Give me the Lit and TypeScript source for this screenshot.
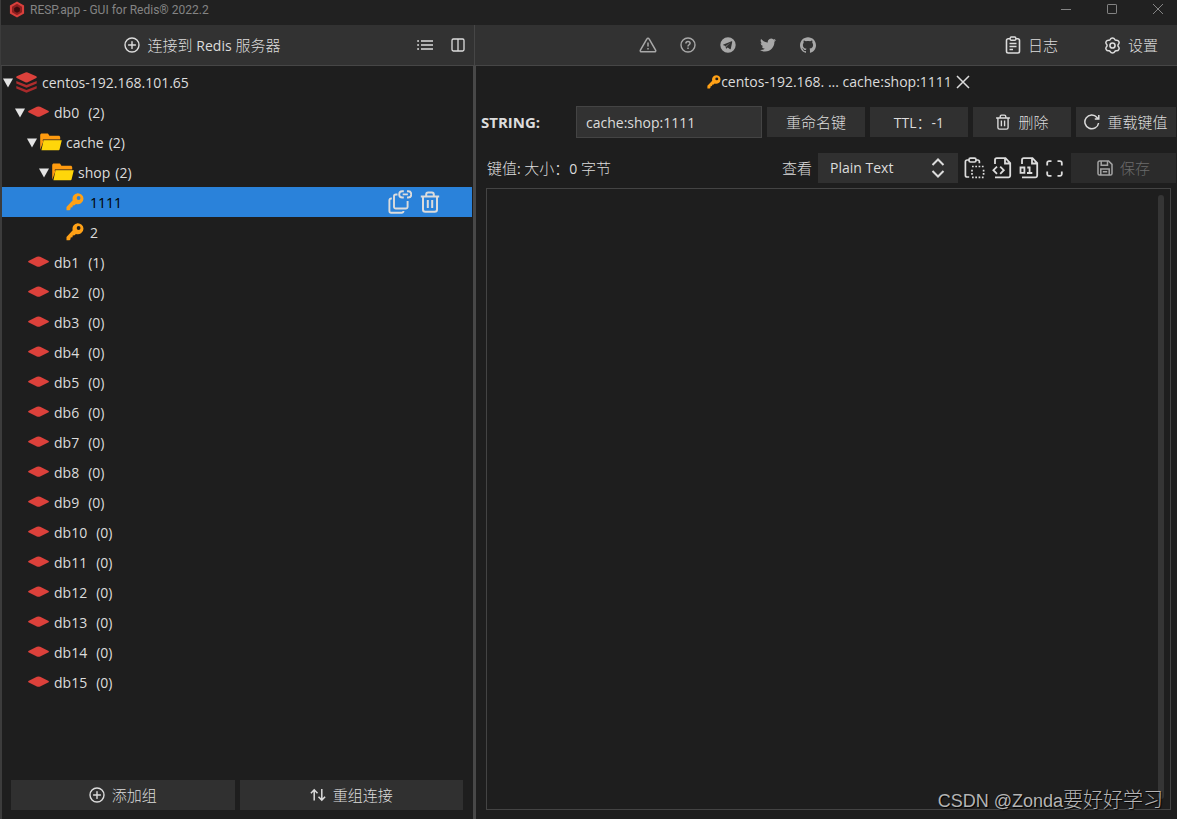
import { LitElement, html, css, svg, nothing, TemplateResult } from "lit";
import { customElement, property, state } from "lit/decorators.js";
import { classMap } from "lit/directives/class-map.js";
import { styleMap } from "lit/directives/style-map.js";

interface Glyph {
  box: string;
  w: number;
  h: number;
  body: TemplateResult;
}

const keyBody = svg`<path fill="#ffa116" fill-rule="evenodd" d="M11.6 0.2a5.700 5.700 0 0 1 5.900 5.600 5.600 5.600 0 0 1-7.600 5.100l-1.300 1.300-1.900.2-.2 1.900-1.800.3-.3 1.800-.9.8H.5v-3.300l6.200-6.600A5.600 5.600 0 0 1 11.600.2zM12.600 3.100a1.900 1.900 0 1 0 0 3.800 1.900 1.900 0 0 0 0-3.800z"/>`;

const glyphs: Record<string, Glyph> = {
  logo: {
    box: "0 0 16 18", w: 16, h: 17,
    body: svg`<path fill="#d9403c" d="M8 .5 15.5 4.7v8.6L8 17.5.5 13.3V4.7z"/><path fill="#8c1f20" d="M8 3 13.3 6v6L8 15 2.7 12V6z"/><path fill="#3a0c0d" d="M8 5.7 11 7.4v3.4L8 12.4 5 10.8V7.4z"/>`,
  },
  minimize: { box: "0 0 12 12", w: 12, h: 12, body: svg`<path d="M1 6.5h10" stroke="currentColor" stroke-width="1"/>` },
  maximize: { box: "0 0 12 12", w: 12, h: 12, body: svg`<rect x="1.5" y="1.5" width="9" height="9" rx=".6" fill="none" stroke="currentColor"/>` },
  quit: { box: "0 0 12 12", w: 12, h: 12, body: svg`<path d="M1 1l10 10M11 1 1 11" stroke="currentColor"/>` },
  plus: {
    box: "0 0 16 16", w: 16, h: 16,
    body: svg`<circle cx="8" cy="8" r="7" fill="none" stroke="currentColor" stroke-width="1.4"/><path d="M8 4.6v6.8M4.6 8h6.8" stroke="currentColor" stroke-width="1.4" stroke-linecap="round"/>`,
  },
  list: {
    box: "0 0 16 12", w: 16, h: 12,
    body: svg`<path d="M4 2h12M4 6h12M4 10h12M.2 2h1.8M.2 6h1.8M.2 10h1.8" stroke="currentColor" stroke-width="1.4"/>`,
  },
  columns: {
    box: "0 0 14 14", w: 14, h: 14,
    body: svg`<rect x="1" y="1" width="12" height="12" rx="1.4" fill="none" stroke="currentColor" stroke-width="1.3"/><path d="M7 1v12" stroke="currentColor" stroke-width="1.3"/>`,
  },
  warning: {
    box: "0 0 18 16", w: 18, h: 16,
    body: svg`<path d="M9 1.2c.5 0 .9.2 1.1.6l6.5 11.3c.5.9-.1 1.7-1.1 1.7h-13c-1 0-1.600-.8-1.100-1.700L7.900 1.800c.2-.4.6-.6 1.100-.6z" fill="none" stroke="currentColor" stroke-width="1.500"/><path d="M9 5.400v4.200M9 11v1.600" stroke="currentColor" stroke-width="1.500"/>`,
  },
  help: {
    box: "0 0 16 16", w: 16, h: 16,
    body: svg`<circle cx="8" cy="8" r="7" fill="none" stroke="currentColor" stroke-width="1.400"/><path d="M5.900 6.500c0-1.300.9-2.100 2.100-2.100s2.100.8 2.100 1.900c0 1.400-2.100 1.500-2.100 3.100M8 10.500V12" fill="none" stroke="currentColor" stroke-width="1.500"/>`,
  },
  telegram: {
    box: "0 0 16 16", w: 16, h: 16,
    body: svg`<path fill="currentColor" fill-rule="evenodd" d="M8 .3a7.7 7.7 0 1 0 0 15.4A7.7 7.7 0 0 0 8 .3zM12.3 4.6l-1.5 7.2c-.1.5-.4.6-.8.4L7.700 10.5l-1.2 1.1c-.2.2-.4.2-.5-.2l-.5-2.5-2.100-.7c-.5-.2-.5-.5.1-.7l8.100-3.300c.4-.2.8.1.700.400zM6.200 8.800l.4 1.600.2-1.400 4-3.800z"/>`,
  },
  twitter: {
    box: "0 0 24 24", w: 16, h: 16,
    body: svg`<path fill="currentColor" d="M23.950 4.570a10 10 0 0 1-2.825.775 4.958 4.958 0 0 0 2.163-2.723c-.951.555-2.005.959-3.127 1.184a4.920 4.920 0 0 0-8.384 4.482C7.690 8.095 4.067 6.130 1.640 3.162a4.822 4.822 0 0 0-.666 2.475c0 1.710.870 3.213 2.188 4.096a4.904 4.904 0 0 1-2.228-.616v.060a4.923 4.923 0 0 0 3.946 4.827 4.996 4.996 0 0 1-2.212.085 4.936 4.936 0 0 0 4.604 3.417 9.867 9.867 0 0 1-6.102 2.105c-.390 0-.779-.023-1.170-.067a13.995 13.995 0 0 0 7.557 2.209c9.053 0 13.998-7.496 13.998-13.985 0-.210 0-.420-.015-.630A9.935 9.935 0 0 0 24 4.590z"/>`,
  },
  github: {
    box: "0 0 24 24", w: 16, h: 16,
    body: svg`<path fill="currentColor" d="M12 .297c-6.630 0-12 5.373-12 12 0 5.303 3.438 9.800 8.205 11.385.6.113.82-.258.82-.577 0-.285-.010-1.040-.015-2.040-3.338.724-4.042-1.610-4.042-1.610C4.422 18.070 3.633 17.700 3.633 17.700c-1.087-.744.084-.729.084-.729 1.205.084 1.838 1.236 1.838 1.236 1.070 1.835 2.809 1.305 3.495.998.108-.776.417-1.305.760-1.605-2.665-.3-5.466-1.332-5.466-5.930 0-1.310.465-2.380 1.235-3.220-.135-.303-.540-1.523.105-3.176 0 0 1.005-.322 3.300 1.230.960-.267 1.980-.399 3-.405 1.020.006 2.040.138 3 .405 2.280-1.552 3.285-1.230 3.285-1.230.645 1.653.240 2.873.120 3.176.765.840 1.230 1.910 1.230 3.220 0 4.610-2.805 5.625-5.475 5.920.420.360.810 1.096.810 2.220 0 1.606-.015 2.896-.015 3.286 0 .315.210.690.825.570C20.565 22.092 24 17.592 24 12.297c0-6.627-5.373-12-12-12"/>`,
  },
  log: {
    box: "0 0 16 18", w: 16, h: 18,
    body: svg`<path d="M5 2.700H3.200A1.700 1.700 0 0 0 1.500 4.400v10.900A1.700 1.700 0 0 0 3.200 17h9.600a1.700 1.700 0 0 0 1.700-1.700V4.400a1.700 1.700 0 0 0-1.700-1.700H11" fill="none" stroke="currentColor" stroke-width="1.600"/><rect x="5.200" y="1" width="5.600" height="3.200" rx="1" fill="none" stroke="currentColor" stroke-width="1.400"/><path d="M4.500 7.500h7M4.500 10.500h7M4.500 13.500H8" stroke="currentColor" stroke-width="1.300"/>`,
  },
  gear: {
    box: "0 0 16 16", w: 17, h: 17,
    body: svg`<path d="M8 .9c1.300 0 1.700.4 2.100 1.300.3.600.9.900 1.600.800 1-.1 1.600.1 2.200 1.100s.6 1.600 0 2.400a1.800 1.800 0 0 0 0 3c.6.800.6 1.400 0 2.400s-1.200 1.200-2.200 1.100c-.7-.1-1.300.2-1.600.8-.4.900-.8 1.300-2.100 1.300s-1.700-.4-2.100-1.300c-.3-.6-.9-.9-1.600-.8-1 .1-1.600-.1-2.200-1.100s-.6-1.600 0-2.400a1.800 1.800 0 0 0 0-3c-.6-.8-.6-1.400 0-2.400s1.200-1.200 2.200-1.100c.7.100 1.300-.2 1.600-.8C6.300 1.300 6.700.9 8 .9z" fill="none" stroke="currentColor" stroke-width="1.400"/><circle cx="8" cy="8" r="2.400" fill="none" stroke="currentColor" stroke-width="1.500"/>`,
  },
  caret: { box: "0 0 10 10", w: 10, h: 10, body: svg`<path fill="#e4e4e4" d="M0 .5h10L5 9.500z"/>` },
  server: {
    box: "0 0 21 21", w: 21, h: 21,
    body: svg`<path fill="#a82a2b" d="M.3 13.900 10.500 18l10.200-4.100v2.500L10.500 20.800.3 16.400z"/><path fill="#b02d2d" d="M.3 8.900 10.500 13.100l10.200-4.200v2.600L10.500 15.800.3 11.500z"/><path fill="#dc413b" d="M9.400.5Q10.500.1 11.600.5L20.300 4.300Q21.200 5.200 20.300 6.100L11.700 10.200Q10.500 10.800 9.300 10.200L.7 6.100Q-.2 5.200.7 4.300z"/>`,
  },
  db: {
    box: "0 0 21 12", w: 21, h: 12,
    body: svg`<path fill="#dc413b" d="M8.900.7Q10.500.2 12.100.7L20.600 5Q21.100 5.600 20.600 6.200L12.100 10.500Q10.500 11 8.900 10.500L.4 6.200Q-.1 5.600.4 5z"/>`,
  },
  folder: {
    box: "0 0 22 18", w: 22, h: 18,
    body: svg`<path fill="#ff9b0f" d="M.2 16.800V2.200C.2 1.200 1 .6 1.800.6h5.400c.8 0 1.200.4 1.600 1.100l.6 1h9.100c1 0 1.700.6 1.700 1.600v3.500H3.600z"/><path fill="#1e1e1e" d="M3 6h18.500v2H2.500z" opacity=".55"/><path fill="#ffd60a" d="M3.600 7.300h18.200l-2.200 8.900c-.1.700-.6 1.100-1.300 1.100H1.400z"/>`,
  },
  key: { box: "0 0 18 18", w: 18, h: 18, body: keyBody },
  keySmall: { box: "0 0 18 18", w: 14, h: 14, body: keyBody },
  copyLink: {
    box: "0 0 24 24", w: 24, h: 24,
    body: svg`<g fill="none" stroke="currentColor" stroke-width="1.900"><path d="M9.500 4.500H7.800A1.800 1.800 0 0 0 6 6.300v10.400a1.800 1.800 0 0 0 1.800 1.800h10a1.800 1.800 0 0 0 1.800-1.800V11"/><path d="M3.800 8.500H3.200A1.800 1.800 0 0 0 1.400 10.300V21A1.800 1.800 0 0 0 3.200 22.800h10.500a1.800 1.800 0 0 0 1.800-1.800"/><path d="M15.800 1.300h-1.500a3 3 0 0 0 0 6.200h1.500M19 1.300h1.200a3 3 0 0 1 0 6.200H19M14.700 4.400h5.200"/></g>`,
  },
  trash: {
    box: "0 0 20 22", w: 20, h: 22,
    body: svg`<g fill="none" stroke="currentColor" stroke-width="2"><path d="M.8 5.500h18.400M6.200 5.200V3.400c0-1.200.7-1.900 1.900-1.900h3.800c1.200 0 1.900.7 1.900 1.900v1.800M3 5.500v13c0 1.500.8 2.300 2.300 2.300h9.400c1.500 0 2.300-.8 2.300-2.300v-13M7.800 9v8M12.200 9v8"/></g>`,
  },
  trashSmall: {
    box: "0 0 20 22", w: 16, h: 16,
    body: svg`<g fill="none" stroke="currentColor" stroke-width="1.900"><path d="M.5 5.500h19M6.200 5.200V3.400c0-1.200.7-1.900 1.900-1.900h3.800c1.200 0 1.900.7 1.900 1.900v1.800M3 5.500v13c0 1.500.8 2.300 2.300 2.300h9.400c1.500 0 2.300-.8 2.300-2.300v-13M7.800 9v8M12.200 9v8"/></g>`,
  },
  reload: {
    box: "0 0 16 16", w: 16, h: 16,
    body: svg`<path d="M14.600 9A6.900 6.900 0 1 1 13 3.400l1 1.100M14.800 1v4h-4" fill="none" stroke="currentColor" stroke-width="1.500"/>`,
  },
  close: { box: "0 0 14 14", w: 14, h: 14, body: svg`<path d="M1 1l12 12M13 1 1 13" stroke="currentColor" stroke-width="1.500"/>` },
  updown: {
    box: "0 0 14 20", w: 14, h: 20,
    body: svg`<path d="M1.500 7 7 1.500 12.500 7M1.500 13 7 18.500l5.500-5.500" fill="none" stroke="currentColor" stroke-width="2"/>`,
  },
  paste: {
    box: "0 0 21 22", w: 21, h: 22,
    body: svg`<g fill="none" stroke="currentColor" stroke-width="1.700"><path d="M5 3H3.200A1.800 1.800 0 0 0 1.400 4.800v13.400A1.800 1.800 0 0 0 3.200 20h2M12 3h1.600a1.800 1.800 0 0 1 1.800 1.800v1.500"/><rect x="5" y="1.200" width="7" height="3.800" rx="1.500"/><path stroke-dasharray="1.700 1.600" d="M8 9.500h12.500M8 20.400h12.500M8 12.700v6M19.600 12.700v6"/></g>`,
  },
  fileCode: {
    box: "0 0 20 22", w: 20, h: 22,
    body: svg`<g fill="none" stroke="currentColor" stroke-width="1.800"><path d="M3 7V3a1.800 1.800 0 0 1 1.800-1.800h8.700l4.700 4.900v12.400a1.800 1.800 0 0 1-1.800 1.800H3M13 1.500v5h5"/><path d="M5 9.600 1.400 13.200 5 16.800M8.200 9.600l3.600 3.600-3.600 3.600"/></g>`,
  },
  fileBinary: {
    box: "0 0 20 22", w: 20, h: 22,
    body: svg`<g fill="none" stroke="currentColor" stroke-width="1.800"><path d="M3 7V3a1.800 1.800 0 0 1 1.800-1.800h8.700l4.700 4.900v12.400a1.800 1.800 0 0 1-1.800 1.800H3M13 1.500v5h5"/><path d="M1.500 10.500h3.900v5.400H1.500zM8.300 10.500h2.300v5.400M8 16h5.300"/></g>`,
  },
  expand: {
    box: "0 0 17 17", w: 17, h: 17,
    body: svg`<path d="M1.200 5.500V3a1.800 1.800 0 0 1 1.800-1.800h2.500M11.500 1.200H14A1.800 1.800 0 0 1 15.800 3v2.500M15.800 11.500V14a1.800 1.800 0 0 1-1.800 1.800h-2.500M5.500 15.800H3A1.800 1.800 0 0 1 1.200 14v-2.500" fill="none" stroke="currentColor" stroke-width="1.800"/>`,
  },
  save: {
    box: "0 0 16 16", w: 16, h: 16,
    body: svg`<g fill="none" stroke="currentColor" stroke-width="1.500"><path d="M1 2.600A1.600 1.600 0 0 1 2.600 1h9L15 4.400v9a1.600 1.600 0 0 1-1.600 1.600H2.600A1.600 1.600 0 0 1 1 13.400z"/><path d="M4.200 1v4.200h6.300V1M3.800 15V9h8.400v6M5.800 11.700h4.400"/></g>`,
  },
  swap: {
    box: "0 0 16 14", w: 16, h: 14,
    body: svg`<path d="M4.200 12.500V2M.9 5.200l3.300-3.400 3.300 3.400M11.800 1v10.800M8.500 8.700l3.300 3.400 3.300-3.400" fill="none" stroke="currentColor" stroke-width="1.500"/>`,
  },
};

const icon = (name: string) => {
  const g = glyphs[name];
  return html`<svg width=${g.w} height=${g.h} viewBox=${g.box} aria-hidden="true">${g.body}</svg>`;
};

const shared = css`
  * { box-sizing: border-box; }
  svg { display: block; flex: none; }
  button, input, select, textarea { font: inherit; color: inherit; margin: 0; border: 0; border-radius: 0; outline: 0; }
  button {
    display: flex; align-items: center; justify-content: center; gap: 7px;
    padding: 0; background: none; white-space: nowrap;
  }
  .cjk { font-size: 15px; font-weight: 300; }
  .latin { font-size: 14px; font-weight: 400; }
`;

interface TreeNode {
  label: string;
  count?: number;
  level: number;
  glyph: string;
  open?: boolean;
}

const nodes: TreeNode[] = [
  { label: "centos-192.168.101.65", level: 0, glyph: "server", open: true },
  { label: "db0", count: 2, level: 1, glyph: "db", open: true },
  { label: "cache", count: 2, level: 2, glyph: "folder", open: true },
  { label: "shop", count: 2, level: 3, glyph: "folder", open: true },
  { label: "1111", level: 4, glyph: "key" },
  { label: "2", level: 4, glyph: "key" },
  ...Array.from({ length: 15 }, (_, i) => ({
    label: `db${i + 1}`, count: i === 0 ? 1 : 0, level: 1, glyph: "db",
  })),
];

@customElement("key-tree")
class KeyTree extends LitElement {
  @state() selected = 4;

  static styles = [shared, css`
    :host { display: block; flex: 1; min-height: 0; overflow: hidden; padding-top: 1px; }
    .row { display: flex; align-items: center; height: 30px; padding-right: 33px; }
    .row.on { background: #2a82da; color: #000; margin-right: 1px; padding-right: 32px; }
    .toggle { width: 10px; height: 12px; margin: 2px 3px 0 1px; flex: none; }
    .pic { display: flex; justify-content: center; width: 21px; margin-right: 5px; flex: none; }
    .label { display: flex; flex: 1; gap: 5px; padding-top: 2px; }
    .label.db { gap: 9px; }
    .acts { display: flex; gap: 8px; color: #dcdcdc; }
  `];

  render() {
    return html`<div role="tree" aria-label="Keys">
      ${nodes.map((n, i) => html`
        <div role="treeitem" aria-level=${n.level + 1} aria-selected=${i === this.selected}
          class=${classMap({ row: true, on: i === this.selected })}
          style=${styleMap({ paddingLeft: `${n.level * 12}px` })}
          @click=${() => (this.selected = i)}>
          ${n.open ? html`<button class="toggle" aria-label="Toggle">${icon("caret")}</button>` : html`<span class="toggle"></span>`}
          <span class="pic">${icon(n.glyph)}</span>
          <span class=${classMap({ label: true, db: n.glyph === "db" })}>
            <span>${n.label}</span>${n.count === undefined ? nothing : html`<span>(${n.count})</span>`}
          </span>
          ${i === this.selected ? html`<span class="acts">
            <button aria-label="Copy name">${icon("copyLink")}</button>
            <button aria-label="Delete">${icon("trash")}</button>
          </span>` : nothing}
        </div>`)}
    </div>`;
  }
}

@customElement("value-editor")
class ValueEditor extends LitElement {
  @property() name = "";

  static styles = [shared, css`
    :host { display: flex; flex-direction: column; flex: 1; min-width: 0; }
    .tabs { display: flex; align-items: center; justify-content: center; height: 31px; padding-left: 24px; }
    .tabs .close { margin-left: 4px; }
    .keyrow { display: flex; align-items: center; gap: 5px; margin-top: 9px; padding: 0 1px 0 5px; }
    .type { width: 90px; font-size: 15px; font-weight: 700; }
    .name { flex: 1; min-width: 0; height: 32px; padding: 0 9px; background: #323232; border: 1px solid #444; }
    .fill { width: 98px; height: 30px; background: #303030; }
    .wide { width: 100px; }
    .viewrow { display: flex; align-items: center; margin-top: 15px; padding: 0 1px 0 11px; }
    .size { flex: 1; }
    .view { margin-right: 6px; }
    .pick { position: relative; width: 140px; margin-right: 6px; }
    .pick select { width: 100%; height: 30px; padding: 0 12px; background: #303030; appearance: none; }
    .pick svg { position: absolute; right: 13px; top: 5px; pointer-events: none; }
    .tools { display: flex; align-items: center; gap: 7px; margin-right: 8px; }
    .save { width: 105px; height: 30px; background: #2b2b2b; color: #6c6c6c; }
    .save svg { color: #a4a4a4; }
    .box { display: flex; flex: 1; margin: 5px 6px 9px 10px; border: 1px solid #444; padding: 6px; min-height: 0; }
    .box textarea { flex: 1; min-width: 0; background: none; resize: none; }
    .bar { width: 6px; border-radius: 3px; background: #353535; margin-bottom: 4px; }
  `];

  render() {
    return html`
      <div class="tabs">${icon("keySmall")}<span>centos-192.168. ... ${this.name}</span>
        <button class="close" aria-label="Close tab">${icon("close")}</button></div>
      <div class="keyrow">
        <label class="type" for="name">STRING:</label>
        <input class="name" id="name" .value=${this.name} />
        <button class="fill cjk">重命名键</button>
        <button class="fill cjk"><span><span class="latin">TTL</span>：<span class="latin">-1</span></span></button>
        <button class="fill cjk">${icon("trashSmall")}删除</button>
        <button class="fill wide cjk">${icon("reload")}重载键值</button>
      </div>
      <div class="viewrow">
        <label class="size cjk" for="value">键值<span class="latin">: </span>大小：<span class="latin">0 </span>字节</label>
        <label class="view cjk" for="view">查看</label>
        <span class="pick"><select id="view"><option>Plain Text</option></select>${icon("updown")}</span>
        <span class="tools">
          <button aria-label="Copy">${icon("paste")}</button>
          <button aria-label="Formatted">${icon("fileCode")}</button>
          <button aria-label="Binary">${icon("fileBinary")}</button>
          <button aria-label="Full screen">${icon("expand")}</button>
        </span>
        <button class="save cjk" disabled>${icon("save")}保存</button>
      </div>
      <div class="box"><textarea id="value"></textarea><span class="bar"></span></div>`;
  }
}

@customElement("app-root")
class AppRoot extends LitElement {
  static styles = [shared, css`
    :host {
      display: flex; flex-direction: column; height: 100vh; overflow: hidden; position: relative;
      background: #1e1e1e; color: #dcdcdc; border-left: 1px solid #3c3c3c;
      font: 14px/20px "Open Sans", "Noto Sans CJK SC", sans-serif;
    }
    .title { display: flex; align-items: center; height: 25px; padding: 0 13px 7px 8px; background: #212121; color: #848484; font: 12px/18px Roboto, "Open Sans", sans-serif; }
    .title .text { flex: 1; margin-left: 5px; padding-top: 2px; }
    .win { display: flex; gap: 34px; }
    .bar { display: flex; height: 41px; background: #323232; border-bottom: 1px solid #464646; }
    .barleft { display: flex; width: 474px; border-right: 1px solid #464646; }
    .connect { flex: 1; padding-right: 4px; }
    .square { width: 33px; }
    .links { display: flex; flex: 1; justify-content: center; padding-right: 4px; color: #a8a8a8; }
    .links button { width: 40px; }
    .right { display: flex; gap: 8px; }
    .right button { padding: 0 19px; }
    .main { display: flex; flex: 1; min-height: 0; }
    .side { display: flex; flex-direction: column; width: 475px; border-left: 1px solid #3c3c3c; border-right: 3px solid #484848; }
    .foot { display: flex; gap: 5px; padding: 0 10px 9px 9px; }
    .foot button { flex: 1; height: 30px; background: #303030; }
    .mark { position: absolute; right: 14px; bottom: 5px; font: 300 20px/30px "Noto Sans CJK SC", sans-serif; color: #b4b4b4; pointer-events: none; text-shadow: 1px 1px 1px #000; }
    .mark span { font: 18px "Liberation Sans", sans-serif; }
  `];

  render() {
    return html`
      <header class="title">${icon("logo")}<span class="text">RESP.app - GUI for Redis® 2022.2</span>
        <span class="win">
          <button aria-label="Minimize">${icon("minimize")}</button>
          <button aria-label="Maximize">${icon("maximize")}</button>
          <button aria-label="Close">${icon("quit")}</button>
        </span>
      </header>
      <nav class="bar">
        <div class="barleft">
          <button class="connect cjk">${icon("plus")}<span>连接到 <span class="latin">Redis</span> 服务器</span></button>
          <button class="square" aria-label="List">${icon("list")}</button>
          <button class="square" aria-label="Split">${icon("columns")}</button>
        </div>
        <div class="links">
          ${["warning", "help", "telegram", "twitter", "github"].map((n) => html`<button aria-label=${n}>${icon(n)}</button>`)}
        </div>
        <div class="right">
          <button class="cjk">${icon("log")}日志</button>
          <button class="cjk">${icon("gear")}设置</button>
        </div>
      </nav>
      <main class="main">
        <section class="side">
          <key-tree></key-tree>
          <div class="foot">
            <button class="cjk">${icon("plus")}添加组</button>
            <button class="cjk">${icon("swap")}重组连接</button>
          </div>
        </section>
        <value-editor name="cache:shop:1111"></value-editor>
      </main>
      <div class="mark"><span>CSDN @Zonda</span>要好好学习</div>`;
  }
}
